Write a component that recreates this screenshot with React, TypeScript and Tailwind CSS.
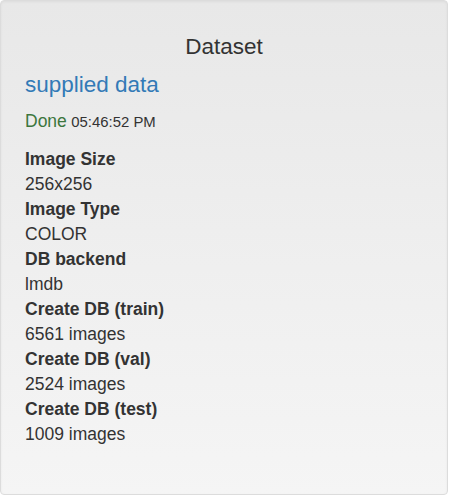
const rows: [string, string][] = [
  ["Image Size", "256x256"],
  ["Image Type", "COLOR"],
  ["DB backend", "lmdb"],
  ["Create DB (train)", "6561 images"],
  ["Create DB (val)", "2524 images"],
  ["Create DB (test)", "1009 images"],
];

export default function App() {
  return (
    <div className="font-['Liberation_Sans',Arial,sans-serif] text-[#333]">
      <div className="w-[448px] h-[495px] border border-[#dcdcdc] rounded-[4px] bg-gradient-to-b from-[#e8e8e8] to-[#f5f5f5] shadow-[inset_0_1px_3px_rgba(0,0,0,0.05)] px-6 pt-[33px]">
        <h4 className="text-center text-[22.5px] leading-[25px]">Dataset</h4>
        <h4 className="mt-[13px] text-[22.5px] leading-[25px] text-[#337ab7]">supplied data</h4>
        <div className="mt-3 leading-[25px]">
          <span className="text-[17.5px] text-[#3c763d]">Done</span>{" "}
          <span className="text-[14.9px]">05:46:52 PM</span>
        </div>
        <dl className="mt-3 text-[17.5px] leading-[25px]">
          {rows.map(([k, v]) => (
            <div key={k}>
              <dt className="font-bold">{k}</dt>
              <dd>{v}</dd>
            </div>
          ))}
        </dl>
      </div>
    </div>
  );
}
